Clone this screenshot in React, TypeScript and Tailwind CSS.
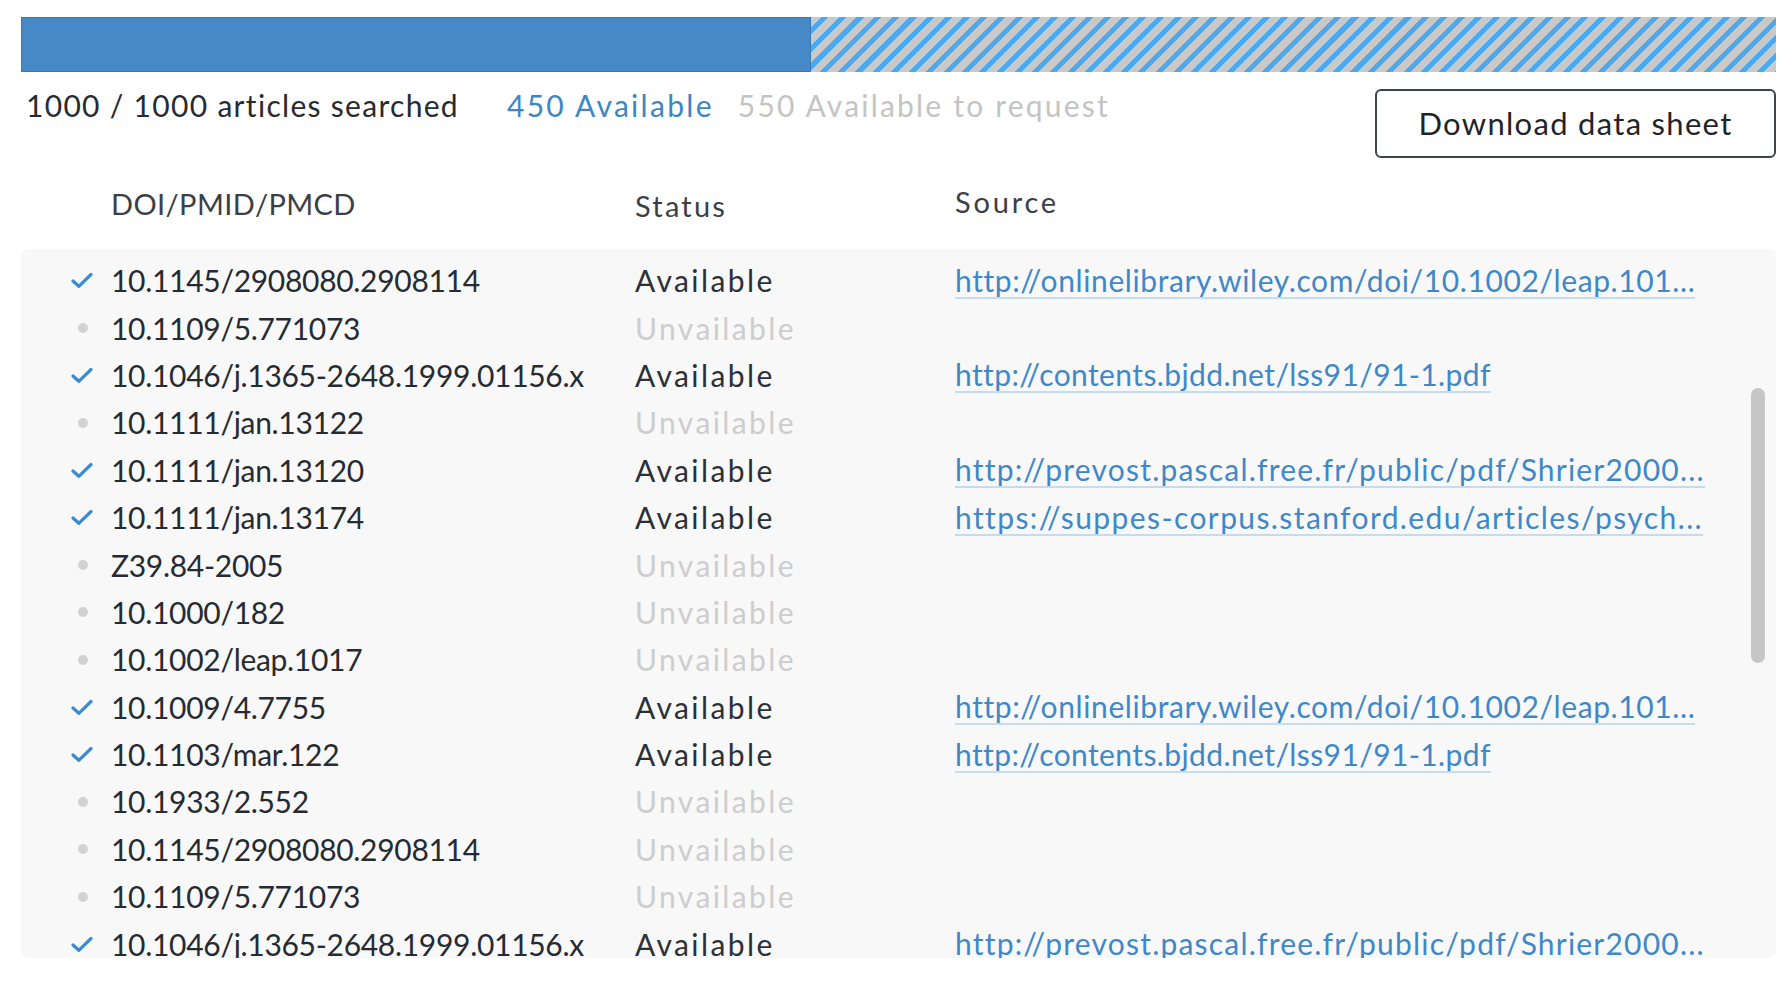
import React from 'react';

type Row = {
  id: string;
  ok: boolean;
  url?: string;
};

type Link = { href: string; track: string };

const WILEY: Link = { href: 'http://onlinelibrary.wiley.com/doi/10.1002/leap.101...', track: 'tracking-[0.6px]' };
const BJDD: Link = { href: 'http://contents.bjdd.net/lss91/91-1.pdf', track: 'tracking-[0.4px]' };
const PREVOST: Link = { href: 'http://prevost.pascal.free.fr/public/pdf/Shrier2000...', track: 'tracking-[1.2px]' };
const SUPPES: Link = { href: 'https://suppes-corpus.stanford.edu/articles/psych...', track: 'tracking-[1.4px]' };

const rows: (Row & { link?: Link })[] = [
  { id: '10.1145/2908080.2908114', ok: true, link: WILEY },
  { id: '10.1109/5.771073', ok: false },
  { id: '10.1046/j.1365-2648.1999.01156.x', ok: true, link: BJDD },
  { id: '10.1111/jan.13122', ok: false },
  { id: '10.1111/jan.13120', ok: true, link: PREVOST },
  { id: '10.1111/jan.13174', ok: true, link: SUPPES },
  { id: 'Z39.84-2005', ok: false },
  { id: '10.1000/182', ok: false },
  { id: '10.1002/leap.1017', ok: false },
  { id: '10.1009/4.7755', ok: true, link: WILEY },
  { id: '10.1103/mar.122', ok: true, link: BJDD },
  { id: '10.1933/2.552', ok: false },
  { id: '10.1145/2908080.2908114', ok: false },
  { id: '10.1109/5.771073', ok: false },
  { id: '10.1046/j.1365-2648.1999.01156.x', ok: true, link: PREVOST },
];

// small check mark used for available rows
const Check = () => (
  <svg width="22" height="17" viewBox="0 0 22 17" fill="none">
    <path d="M2 9 L7.8 14.3 L20 2.5" stroke="#3b8bd3" strokeWidth="3.2" strokeLinecap="round" strokeLinejoin="round" />
  </svg>
);

const Dot = () => <span className="block w-[10px] h-[10px] rounded-full bg-[#d2d2d2] mr-[5px]" />;

function ProgressBar() {
  return (
    <div className="flex h-[55px] w-full">
      <div className="w-[45%] h-full bg-[#4589c6] border border-[#3579b8]" />
      <div className="flex-1 h-full bg-[repeating-linear-gradient(135deg,#c9c9c9_0px,#c9c9c9_7.5px,#4ba9ef_7.5px,#4ba9ef_12.5px)]" />
    </div>
  );
}

export default function App() {
  return (
    <div className="min-h-screen bg-white font-['Lato',sans-serif] text-[#262b32]">
      <div className="pl-[21px] pr-[16px] pt-[17px]">
        <ProgressBar />

        {/* summary line + download */}
        <div className="flex items-start mt-[17px]">
          <div className="flex items-center text-[30px] tracking-[1.3px] pl-[5px] h-[32px]">
            <span>1000 / 1000 articles searched</span>
            <span className="ml-[48px] text-[#3d86c6] tracking-[2.3px]">450 Available</span>
            <span className="ml-[24px] text-[#c4c4c4] tracking-[2.2px]">550 Available to request</span>
          </div>
          <button className="ml-auto w-[401px] h-[69px] border-2 border-[#3f4449] rounded-[6px] text-[31px] tracking-[1.3px] text-[#1f242b] bg-white">
            Download data sheet
          </button>
        </div>

        {/* header */}
        <div className="flex items-center h-[91px] text-[29px] text-[#3b4047]">
          <div className="w-[614px] pl-[90px] tracking-[0.4px]">DOI/PMID/PMCD</div>
          <div className="w-[320px] pt-[4px] tracking-[2.2px]">Status</div>
          <div className="pb-[4px] tracking-[2.8px]">Source</div>
        </div>

        {/* table body */}
        <div className="relative bg-[#f8f8f8] rounded-[8px] h-[709px] overflow-hidden pt-[8px]">
          {rows.map((r, i) => (
            <div key={i} className="flex items-center h-[47.4px] text-[30px]">
              <div className="w-[90px] flex justify-end pr-[18px]">
                {r.ok ? <Check /> : <Dot />}
              </div>
              <div className="w-[524px] tracking-[-0.3px]">{r.id}</div>
              <div className={`w-[320px] tracking-[2.4px] ${r.ok ? 'text-[#2b3038]' : 'text-[#cdcdcd]'}`}>
                {r.ok ? 'Available' : 'Unvailable'}
              </div>
              {r.link && (
                <span className={`text-[#3f88c8] ${r.link.track} border-b-2 border-[#c5dcf0] leading-[34px]`}>
                  {r.link.href}
                </span>
              )}
            </div>
          ))}
          <div className="absolute right-[11px] top-[139px] w-[14px] h-[275px] rounded-full bg-[#c6c6c6]" />
        </div>
      </div>
    </div>
  );
}
